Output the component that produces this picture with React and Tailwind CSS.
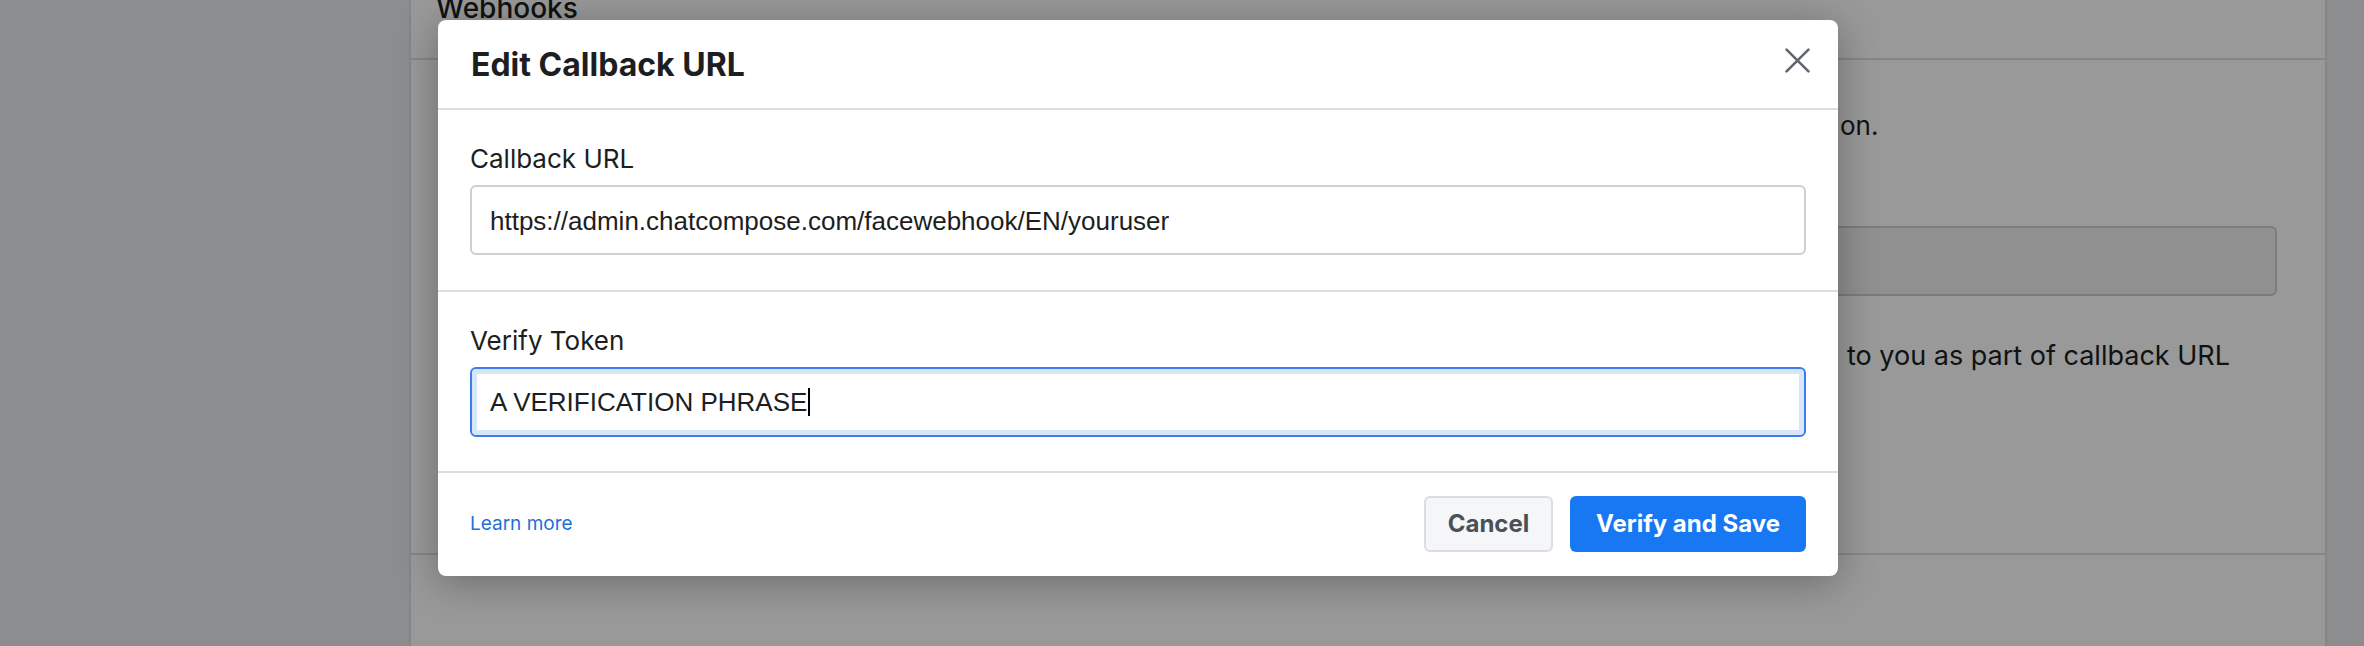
import React from "react";

const CloseIcon = () => (
  <svg width="25" height="25" viewBox="0 0 24 24" fill="none">
    <path d="M1.5 1.5L22.5 22.5M22.5 1.5L1.5 22.5" stroke="#606770" strokeWidth="2.5" strokeLinecap="round" />
  </svg>
);

const App = () => {
  return (
    <div className="relative h-[646px] w-[2364px] overflow-hidden bg-[#e9ebee] font-['Inter',sans-serif] text-[#1c1e21]">
      {/* Settings page behind the dialog */}
      <div className="ml-[409px] mr-[37px] h-full border-x-2 border-[#dddfe2] bg-white">
        <div className="flex h-[60px] items-start border-b-2 border-[#dddfe2] px-[25px]">
          <h2 className="-mt-[9px] text-[28px] font-medium leading-[34px]">Webhooks</h2>
        </div>
        <div className="h-[495px] border-b-2 border-[#dddfe2] px-[48px] pt-[50px]">
          <p className="pl-[1381px] text-[26px] leading-[32px]">on.</p>
          <div className="mt-[84px] h-[70px] rounded-[6px] border-2 border-[#ccd0d5] bg-[#f0f1f2]" />
          <p className="mt-[44px] pl-[1388px] text-[27px] leading-[32px]">to you as part of callback URL</p>
        </div>
      </div>

      {/* Dialog */}
      <div className="absolute inset-0 bg-black/40 pl-[438px] pt-[20px]">
        <div className="w-[1400px] overflow-hidden rounded-[8px] bg-white shadow-[0_6px_40px_rgba(0,0,0,0.3)]">
          <div className="flex h-[90px] items-center justify-between border-b-2 border-[#dadde1] pl-[33px] pr-[28px]">
            <h1 className="mt-[2px] text-[32px] font-bold leading-[38px]">Edit Callback URL</h1>
            <button type="button" className="-mt-[8px]">
              <CloseIcon />
            </button>
          </div>

          {/* Callback URL */}
          <div className="border-b-2 border-[#dadde1] px-[32px] pt-[34px] pb-[35px]">
            <label className="block text-[26px] leading-[30px]">Callback URL</label>
            <div className="mt-[11px] flex h-[70px] items-center rounded-[6px] border-2 border-[#ccd0d5] pl-[18px] pt-[2px] font-['Liberation_Sans',Arial,sans-serif] text-[26px]">
              https://admin.chatcompose.com/facewebhook/EN/youruser
            </div>
          </div>

          {/* Verify Token */}
          <div className="border-b-2 border-[#dadde1] px-[32px] pt-[34px] pb-[34px]">
            <label className="block text-[26px] leading-[30px]">Verify Token</label>
            <div className="mt-[11px] flex h-[70px] items-center rounded-[6px] border-2 border-[#3b7ee8] pl-[18px] font-['Liberation_Sans',Arial,sans-serif] text-[26px] shadow-[inset_0_0_0_5px_#d8e5fa]">
              A VERIFICATION PHRASE
              <span className="ml-[1px] h-[28px] w-[2px] bg-black" />
            </div>
          </div>

          {/* Footer */}
          <div className="flex items-center justify-between px-[32px] pt-[23px] pb-[24px]">
            <a href="#" className="text-[19px] text-[#216fdb]">Learn more</a>
            <div className="flex gap-[17px]">
              <button type="button" className="h-[56px] w-[129px] rounded-[6px] border-2 border-[#dadde1] bg-[#f5f6f7] text-[24px] font-bold text-[#4b4f56]">
                Cancel
              </button>
              <button type="button" className="h-[56px] w-[236px] rounded-[6px] bg-[#1877f2] text-[24px] font-bold text-white">
                Verify and Save
              </button>
            </div>
          </div>
        </div>
      </div>
    </div>
  );
};

export default App;
